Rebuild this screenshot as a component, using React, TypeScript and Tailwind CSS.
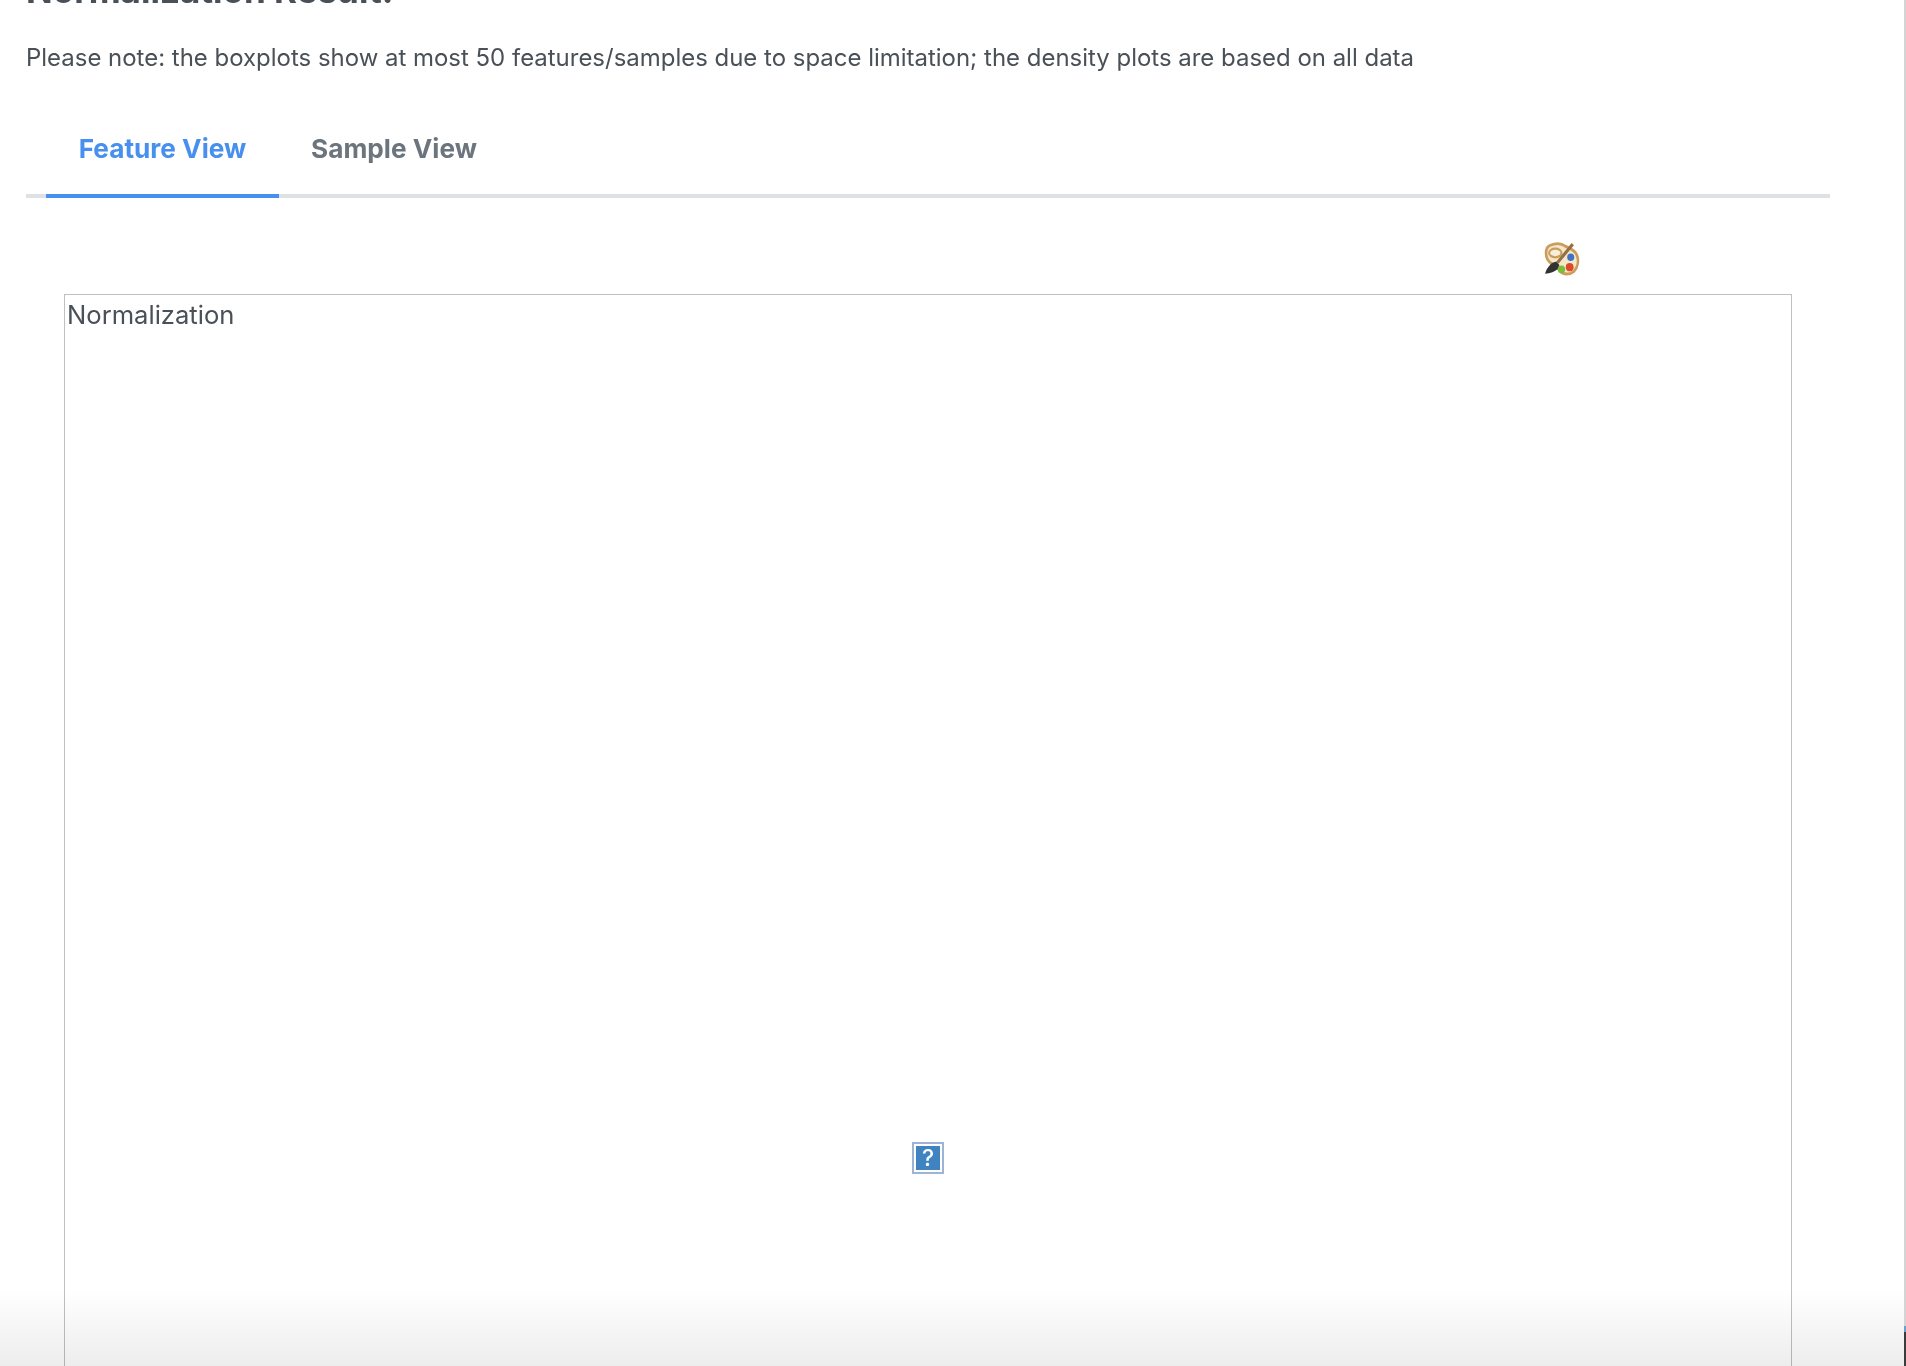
export default function App() {
  return (
    <div className="relative h-[1366px] w-[1906px] overflow-hidden bg-white font-['Inter',sans-serif] text-[#495057]">
      <div className="-mt-[31px] w-[1904px] pl-[26px]">
        <h3 className="text-[35px] font-bold leading-[42px] text-[#495057]">Normalization Result:</h3>
        <p className="mt-[31px] text-[23.96px] leading-[32px]">Please note: the boxplots show at most 50 features/samples due to space limitation; the density plots are based on all data</p>
        <div className="mt-[34px] flex w-[1804px] border-b-4 border-[#dee2e6] pl-[20px]">
          <div className="-mb-[4px] flex h-[90px] w-[233px] items-center justify-center border-b-4 border-[#4790ee] pb-[4px] text-[26.2px] font-bold text-[#4790ee]">Feature View</div>
          <div className="flex h-[86px] w-[230px] items-center justify-center pb-[4px] text-[26.2px] font-bold text-[#6c757d]">Sample View</div>
        </div>
        <div className="mt-[44px] flex w-[1555px] justify-end">
          <svg width="37" height="35" viewBox="0 0 36 32" preserveAspectRatio="none">
            <defs>
              <filter id="soft" x="-10%" y="-10%" width="120%" height="120%">
                <feGaussianBlur stdDeviation="0.6" />
              </filter>
            </defs>
            <g filter="url(#soft)">
              <path d="M6 3c5-2 11-2 15 1 4 2 9 3 11 8 2 5 1 11-3 15-4 3-10 3-13 0-2-3-5-5-8-7-4-2-6-5-6-10 0-3 1-6 4-7z" fill="#f4e8cc" stroke="#cb9d5c" strokeWidth="2.6" />
              <ellipse cx="11" cy="10" rx="6" ry="4" fill="#f7efdc" stroke="#cb9d5c" strokeWidth="2" />
              <circle cx="26" cy="14" r="3.4" fill="#3f73c8" />
              <circle cx="25" cy="23" r="3.8" fill="#dd4a2a" />
              <circle cx="17" cy="25" r="3.6" fill="#7dbb3a" />
              <path d="M28 2 L13 19" stroke="#96703f" strokeWidth="3" />
              <path d="M12 18l3 3-2 4c-2 2-7 4-12 4 1-3 2-5 4-7 2-3 5-4 7-4z" fill="#333" />
            </g>
          </svg>
        </div>
        <div className="mt-[17px] ml-[38px] flex h-[1100px] w-[1728px] flex-col border border-b-0 border-[#c0c0c0] px-[2px] pt-[1px]">
          <div className="text-[25.6px] leading-[38px]">Normalization</div>
          <div className="mt-[808px] flex justify-center">
            <div className="flex h-[32px] w-[32px] items-center justify-center border-2 border-[#9db4d8] bg-[#3f84c0] text-[23px] font-medium leading-none text-white outline-2 -outline-offset-4 outline-white">?</div>
          </div>
        </div>
      </div>
      <div className="absolute inset-x-0 bottom-0 h-[76px] bg-gradient-to-b from-white to-[#ededed] mix-blend-multiply" />
      <div className="absolute right-0 top-0 h-full w-[2px] bg-[#d4d4d4]" />
      <div className="absolute bottom-0 right-0 h-[40px] w-[2px] bg-[#3c3c3c]" />
      <div className="absolute bottom-[34px] right-0 h-[6px] w-[2px] bg-[#6d9fcb]" />
    </div>
  );
}
